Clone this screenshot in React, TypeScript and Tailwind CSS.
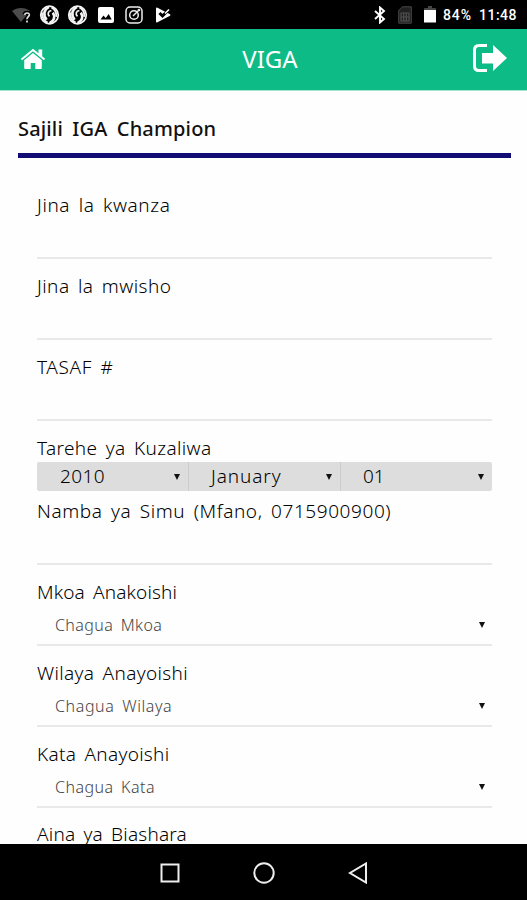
import type { ReactNode } from "react";

const Caret = () => (
  <svg viewBox="0 0 6 6" className="w-[6px] h-[6px] shrink-0" fill="#111">
    <path d="M0 0h6L3 6z" />
  </svg>
);

const SwirlIcon = () => (
  <svg viewBox="0 0 22 22" className="w-[21px] h-[22px]" fill="none" stroke="#f4f4f4">
    <circle cx="11" cy="11" r="9.2" strokeWidth="1.800" />
    <path d="M10.500 2.500C5 5 4 11 8 16" strokeWidth="2.800" />
    <path d="M3 8C3 13 5 17 9 19M13 3C17 5 18.500 9 18 13" strokeWidth="2" />
    <path d="M11 19.500C16.500 17 17 12 14.500 8.500" strokeWidth="2.800" />
    <path d="M13 6.500C9.500 6.500 8.500 10 11 12.500" strokeWidth="1.800" />
  </svg>
);

const StatusBar = () => (
  <div className="h-[29px] shrink-0 bg-black text-white flex items-center justify-between pl-[12px] pr-[9px]">
    <div className="flex items-center">
      <svg viewBox="0 0 21 18" className="w-[21px] h-[18px]">
        <path d="M0 5C5 1 13 1 18 5L9 16z" fill="#4c4c4c" />
        <path d="M12.500 8.500C13 6 18 6 17.500 9C17.300 10.500 15 11 15 13.200M15 14.600v2" stroke="#000" strokeWidth="4" fill="none" />
        <path d="M12.700 8.800C13 6.300 17.700 6.500 17.300 9C17 10.500 15 11 15 13.200M15 14.600v2" stroke="#ddd" strokeWidth="1.700" fill="none" />
      </svg>
      <div className="ml-[6px]"><SwirlIcon /></div>
      <div className="ml-[7px]"><SwirlIcon /></div>
      <svg viewBox="0 0 16 16" className="w-[16px] h-[16px] ml-[10px]">
        <rect width="16" height="16" rx="2" fill="#fff" />
        <path d="M2.500 12.500l3-4 2.200 2.500 3-4 3 5.500z" fill="#000" />
      </svg>
      <svg viewBox="0 0 18 18" className="w-[18px] h-[18px] ml-[11px]" fill="none" stroke="#eee" strokeWidth="1.500">
        <rect x="1" y="1" width="16" height="16" rx="4" />
        <circle cx="9" cy="9" r="4.300" />
        <path d="M8 10l6-6" />
        <circle cx="14" cy="4" r="0.600" />
      </svg>
      <svg viewBox="0 0 16 16" className="w-[16px] h-[16px] ml-[12px]">
        <path d="M1 1.500Q1 0 2.500 .7L15 7.300Q16 8 15 8.700L2.500 15.300Q1 16 1 14.500z" fill="#fff" />
        <path d="M4.500 6l3 3L13.500 3" stroke="#000" strokeWidth="3" fill="none" />
        <path d="M10 6.500L14 2.500" stroke="#fff" strokeWidth="1.600" fill="none" />
      </svg>
    </div>
    <div className="flex items-center">
      <svg viewBox="0 0 12 18" className="w-[12px] h-[18px]" fill="none" stroke="#fff" strokeWidth="1.900">
        <path d="M1 5l9 8-4 3.500v-15L10 5l-9 8" />
      </svg>
      <svg viewBox="0 0 14 18" className="w-[14px] h-[18px] ml-[12px]">
        <path d="M4.500.8H13.300V17.200H.7V4.500z" fill="#202020" stroke="#484848" />
        <path d="M3 7h8v8H3zM3 11h8M5.700 7v8M8.300 7v8" fill="none" stroke="#505050" strokeWidth="1.200" />
      </svg>
      <svg viewBox="0 0 12 18" className="w-[12px] h-[18px] ml-[12px]">
        <path d="M4 0h4v2h3q1 0 1 1v2H0V3q0-1 1-1h3z" fill="#444" />
        <path d="M0 4h12v12.500H0z" fill="#fff" />
      </svg>
      <span className="ml-[7px] w-[29px] font-['Roboto'] font-medium text-[14px] leading-none tracking-[0.9px] whitespace-nowrap">84%</span>
      <span className="ml-[7px] w-[39px] font-['Roboto'] font-medium text-[14px] leading-none tracking-[0.5px] whitespace-nowrap">11:48</span>
    </div>
  </div>
);

const Header = () => (
  <header className="h-[62px] shrink-0 bg-[#0dbb86] border-b border-[#a5e5d0] flex items-center justify-between pl-[20px] pr-[19px] text-white">
    <svg viewBox="0 0 26 22" className="w-[26px] h-[22px] mb-[2px]" fill="#fff">
      <path d="M13 5L21.800 12.200V20Q21.800 21 20.800 21H15.300V15H10.700V21H5.200Q4.200 21 4.200 20V12.200z" />
      <path d="M1.500 11.500L13 2l11.500 9.500" fill="none" stroke="#fff" strokeWidth="2" />
      <path d="M18.500 1.500h3.700v8l-3.700-3z" />
    </svg>
    <h1 className="text-[24px] leading-none ml-[21px] mb-[2px] font-normal">VIGA</h1>
    <svg viewBox="0 0 35 28" className="w-[35px] h-[28px] mb-[3px]">
      <path d="M14 1.500H6Q1.500 1.500 1.500 6V22Q1.500 26.500 6 26.500H14" fill="none" stroke="#fff" strokeWidth="3" />
      <path d="M9 9H20V1L34 14 20 27V19.500H9z" fill="#fff" />
    </svg>
  </header>
);

const Label = ({ className = "", children }: { className?: string; children: ReactNode }) => (
  <label className={`block text-[19px] leading-[28px] text-black [word-spacing:3px] whitespace-nowrap ${className}`}>{children}</label>
);

const TextField = ({ label, tracking }: { label: string; tracking: string }) => (
  <div className="h-[81px] pt-[13px] border-b-2 border-[#e8eaea]">
    <Label className={tracking}>{label}</Label>
  </div>
);

const SelectField = ({ label, value, tracking, valueTracking }: { label: string; value: string; tracking: string; valueTracking: string }) => (
  <div className="h-[81px] pt-[13px] border-b-2 border-[#e8eaea]">
    <Label className={tracking}>{label}</Label>
    <div className="h-[38px] flex items-center justify-between pl-[18px] pr-[7px]">
      <span className={`text-[16px] text-[#444] [word-spacing:3px] ${valueTracking}`}>{value}</span>
      <Caret />
    </div>
  </div>
);

const DatePart = ({ value, className }: { value: string; className: string }) => (
  <div className={`h-[29px] flex items-center justify-between pr-[8px] text-[19px] text-black ${className}`}>
    <span>{value}</span>
    <Caret />
  </div>
);

const NavBar = () => (
  <nav className="h-[56px] shrink-0 bg-black flex items-center justify-between pt-[2px] pl-[159px] pr-[158px]">
    <svg viewBox="0 0 22 22" className="w-[22px] h-[22px]" fill="none" stroke="#eee" strokeWidth="2">
      <path d="M2.500 2.500h17v17h-17z" />
    </svg>
    <svg viewBox="0 0 24 24" className="w-[24px] h-[24px]" fill="none" stroke="#eee" strokeWidth="2">
      <circle cx="12" cy="12" r="9.700" />
    </svg>
    <svg viewBox="0 0 22 22" className="w-[22px] h-[22px]" fill="none" stroke="#eee" strokeWidth="2">
      <path d="M19 1.500v19L3 11z" />
    </svg>
  </nav>
);

const App = () => (
  <div className="w-full h-[900px] flex flex-col overflow-hidden bg-[#fefefe] font-['Noto_Sans',sans-serif] font-light">
    <StatusBar />
    <Header />
    <main className="flex-1 min-h-0 overflow-hidden pl-[18px] pr-[16px]">
      <h2 className="h-[67px] pt-[24px] border-b-[5px] border-[#110d75] text-[20px] leading-[28px] font-medium text-[#111] tracking-[0.15px] [word-spacing:4px]">
        Sajili IGA Champion
      </h2>
      <form className="pt-[20px] pl-[19px] pr-[19px]">
        <TextField label="Jina la kwanza" tracking="tracking-[0.6px]" />
        <TextField label="Jina la mwisho" tracking="tracking-[0.45px]" />
        <TextField label="TASAF #" tracking="tracking-[0.6px]" />
        <div className="pt-[13px]">
          <Label className="tracking-[0.38px]">Tarehe ya Kuzaliwa</Label>
          <div className="flex rounded-[2px] bg-[#dddddd]">
            <DatePart value="2010" className="w-[152px] pl-[23px] border-r border-[#cccccc] tracking-[0.4px]" />
            <DatePart value="January" className="w-[152px] pl-[22px] border-r border-[#cccccc] tracking-[0.9px]" />
            <DatePart value="01" className="flex-1 pl-[22px]" />
          </div>
        </div>
        <div className="h-[74px] pt-[6px] border-b-2 border-[#e8eaea]">
          <Label className="tracking-[0.58px]">Namba ya Simu (Mfano, 0715900900)</Label>
        </div>
        <SelectField label="Mkoa Anakoishi" value="Chagua Mkoa" tracking="tracking-[0.15px]" valueTracking="tracking-[0.4px]" />
        <SelectField label="Wilaya Anayoishi" value="Chagua Wilaya" tracking="tracking-[0.35px]" valueTracking="tracking-[0.6px]" />
        <SelectField label="Kata Anayoishi" value="Chagua Kata" tracking="tracking-[0.3px]" valueTracking="tracking-[0.45px]" />
        <div className="pt-[12px]">
          <Label className="tracking-[0.2px]">Aina ya Biashara</Label>
        </div>
      </form>
    </main>
    <NavBar />
  </div>
);

export default App;
